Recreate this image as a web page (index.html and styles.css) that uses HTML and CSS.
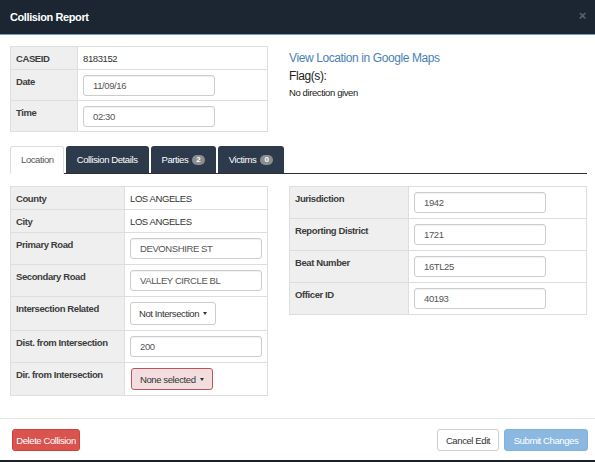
FILE: index.html
```
<!DOCTYPE html>
<html lang="en">
<head>
<meta charset="utf-8">
<title>Collision Report</title>
<link rel="stylesheet" href="styles.css">
</head>
<body>
<div class="modal">
  <div class="modal-header">
    <h4 class="modal-title">Collision Report</h4>
    <span class="close">&times;</span>
  </div>
  <div class="modal-body">
    <div class="row top-row">
      <table class="grid-table case-table">
        <tr><th>CASEID</th><td class="plain">8183152</td></tr>
        <tr><th>Date</th><td><input class="field" type="text" value="11/09/16"></td></tr>
        <tr><th>Time</th><td><input class="field" type="text" value="02:30"></td></tr>
      </table>
      <div class="info">
        <a class="map-link" href="#">View Location in Google Maps</a>
        <div class="flags">Flag(s):</div>
        <div class="flag-item">No direction given</div>
      </div>
    </div>

    <ul class="tabs">
      <li class="tab active">Location</li>
      <li class="tab">Collision Details</li>
      <li class="tab">Parties <span class="badge">2</span></li>
      <li class="tab">Victims <span class="badge">0</span></li>
    </ul>

    <div class="row tab-row">
      <table class="grid-table loc-table">
        <tr><th>County</th><td class="plain">LOS ANGELES</td></tr>
        <tr><th>City</th><td class="plain">LOS ANGELES</td></tr>
        <tr><th>Primary Road</th><td><input class="field" type="text" value="DEVONSHIRE ST"></td></tr>
        <tr><th>Secondary Road</th><td><input class="field" type="text" value="VALLEY CIRCLE BL"></td></tr>
        <tr><th>Intersection Related</th><td><button class="dropdown">Not Intersection <span class="caret"></span></button></td></tr>
        <tr><th>Dist. from Intersection</th><td><input class="field" type="text" value="200"></td></tr>
        <tr><th>Dir. from Intersection</th><td><button class="dropdown invalid">None selected <span class="caret"></span></button></td></tr>
      </table>
      <table class="grid-table juris-table">
        <tr><th>Jurisdiction</th><td><input class="field" type="text" value="1942"></td></tr>
        <tr><th>Reporting District</th><td><input class="field" type="text" value="1721"></td></tr>
        <tr><th>Beat Number</th><td><input class="field" type="text" value="16TL25"></td></tr>
        <tr><th>Officer ID</th><td><input class="field" type="text" value="40193"></td></tr>
      </table>
    </div>
  </div>
  <div class="modal-footer">
    <button class="btn btn-danger">Delete Collision</button>
    <div class="footer-actions">
      <button class="btn btn-default">Cancel Edit</button>
      <button class="btn btn-primary" disabled>Submit Changes</button>
    </div>
  </div>
</div>
</body>
</html>
```
FILE: styles.css
```
* { box-sizing: border-box; }

html, body {
  margin: 0;
  padding: 0;
}

body {
  background: #1a212b;
  font-family: "Liberation Sans", Arial, sans-serif;
  font-size: 9.5px;
  letter-spacing: -0.4px;
  color: #333;
  height: 462px;
  overflow: hidden;
}

input, button {
  font-family: inherit;
  font-size: inherit;
  letter-spacing: inherit;
}

.modal {
  background: #fff;
  height: 460px;
  display: flex;
  flex-direction: column;
}

/* header */
.modal-header {
  background: #1c2532;
  height: 35px;
  border-bottom: 1px solid #6f9dc9;
  display: flex;
  align-items: center;
  justify-content: space-between;
  padding: 0 9px 0 10px;
}

.modal-title {
  margin: 0;
  color: #fff;
  font-size: 11px;
  font-weight: bold;
  padding-bottom: 1px;
}

.close {
  color: #5d646e;
  font-size: 13px;
  font-weight: bold;
  line-height: 1;
  margin-top: -4px;
}

/* body */
.modal-body {
  flex: 1;
  padding: 11px 8px 0 10px;
}

.row {
  display: grid;
  grid-template-columns: 258px 298px;
  column-gap: 21px;
  align-items: start;
}

.grid-table {
  border-collapse: collapse;
  width: 100%;
}

.grid-table th,
.grid-table td {
  border: 1px solid #dedede;
  padding: 5px;
  vertical-align: top;
  text-align: left;
  line-height: 12px;
}

.grid-table th {
  background: #efefef;
  font-weight: bold;
  color: #3c3c3c;
  padding-top: 6px;
  padding-bottom: 4px;
}

.grid-table td.plain { padding-top: 6px; padding-bottom: 4px; }

.case-table td { padding-bottom: 4px; }

.case-table th { width: 67px; }
.loc-table th { width: 115px; }
.juris-table th { width: 119px; }

.field {
  display: block;
  width: 132px;
  height: 21px;
  border: 1px solid #cccccc;
  border-radius: 3px;
  padding: 0 9px;
  color: #555;
  background: #fff;
  box-shadow: inset 0 1px 1px rgba(0, 0, 0, 0.06);
  margin: 0;
}

/* info block */
.info {
  padding-top: 5px;
}

.map-link {
  display: block;
  color: #4a80b9;
  text-decoration: none;
  font-size: 12px;
  line-height: 15px;
}

.flags {
  font-size: 12px;
  color: #222;
  margin-top: 3px;
  line-height: 15px;
}

.flag-item {
  color: #222;
  margin-top: 3px;
  line-height: 12px;
}

/* tabs */
.tabs {
  list-style: none;
  margin: 14px 0 12px 0;
  padding: 0;
  display: flex;
  gap: 2px;
  border-bottom: 1px solid #2d2f33;
  height: 28px;
}

.tab {
  background: #2c3a4c;
  color: #fff;
  height: 27px;
  padding: 0 11px;
  display: flex;
  align-items: center;
  border-radius: 3px 3px 0 0;
  line-height: 12px;
}

.tab.active {
  background: #fff;
  color: #555;
  border: 1px solid #dddddd;
  border-bottom-color: #fff;
  height: 28px;
  padding: 0 9px 0 10px;
}

.badge {
  display: inline-block;
  background: #8a8d91;
  color: #fff;
  font-size: 8px;
  font-weight: bold;
  letter-spacing: 0;
  line-height: 10px;
  padding: 0 4px;
  border-radius: 5px;
  margin-left: 4px;
}

/* dropdown buttons */
.dropdown {
  display: inline-flex;
  align-items: center;
  height: 23px;
  padding: 0 8px;
  border: 1px solid #cccccc;
  border-radius: 3px;
  background: #fff;
  color: #333;
  margin: 0;
}

.dropdown.invalid {
  background: #f2dede;
  border-color: #b9575a;
  height: 22px;
  margin-left: 1px;
}

.caret {
  display: inline-block;
  width: 0;
  height: 0;
  margin-left: 4px;
  border-top: 3px solid #333;
  border-left: 2.5px solid transparent;
  border-right: 2.5px solid transparent;
}

/* footer */
.modal-footer {
  border-top: 1px solid #e5e5e5;
  height: 42px;
  padding: 10px 7px 0 12px;
  display: flex;
  justify-content: space-between;
  align-items: flex-start;
}

.footer-actions {
  display: flex;
  gap: 5px;
}

.btn {
  height: 22px;
  border-radius: 3px;
  padding: 0;
  border: 1px solid transparent;
  margin: 0;
}

.btn-danger {
  background: #d9534f;
  border-color: #d43f3a;
  color: #fff;
  width: 68px;
}

.btn-default {
  background: #fff;
  border-color: #cccccc;
  color: #333;
  width: 62px;
}

.btn-primary {
  background: #8bb8e0;
  border-color: #82b1db;
  color: #fff;
  width: 84px;
}
```
